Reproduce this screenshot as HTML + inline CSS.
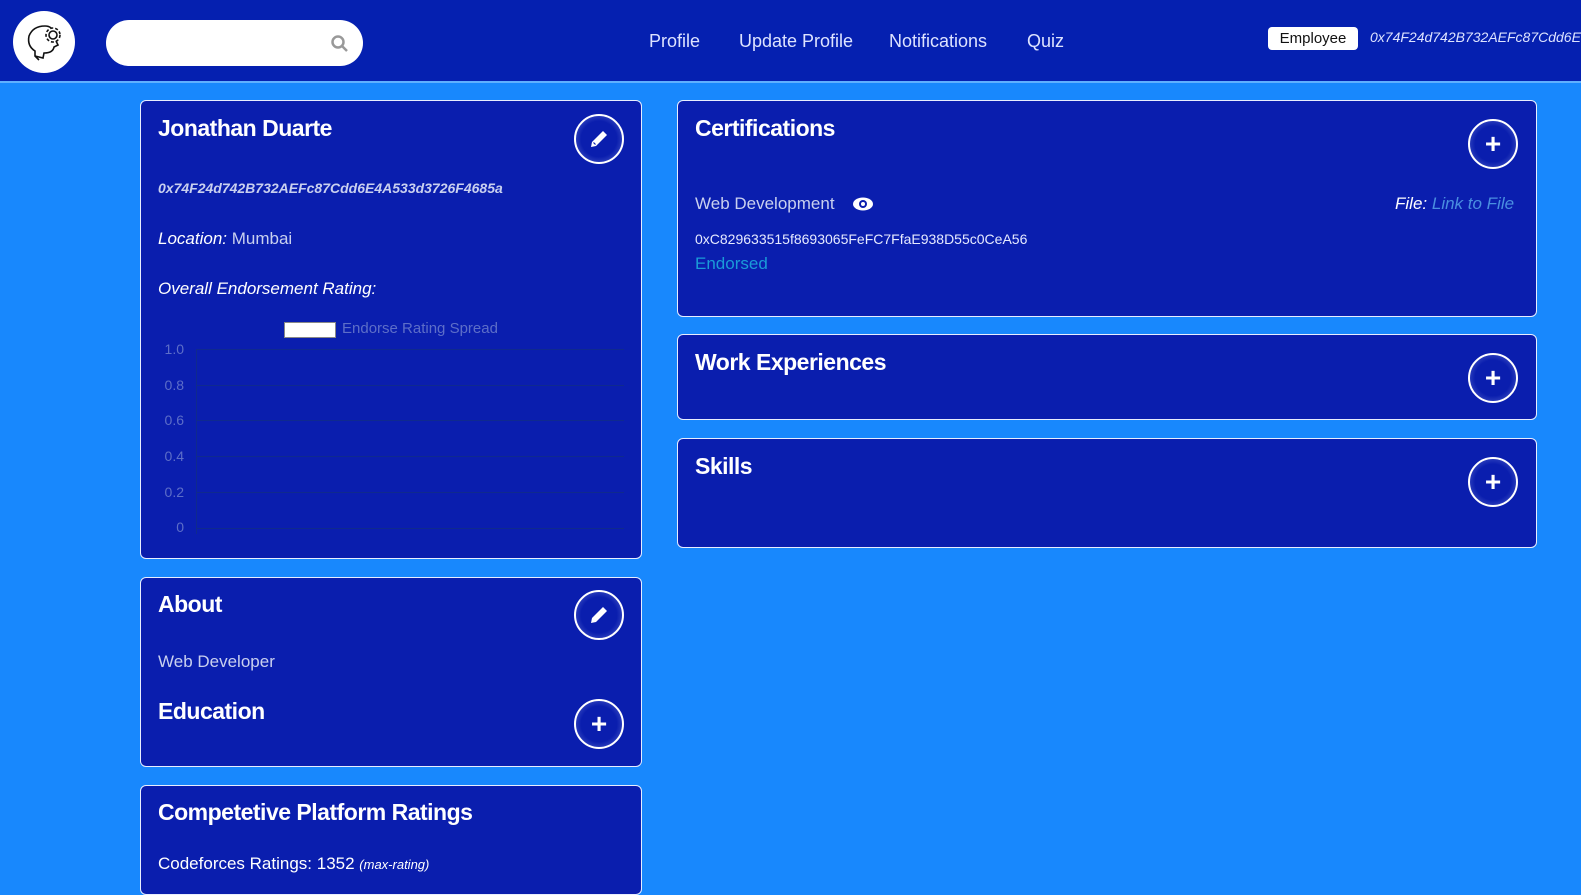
<!DOCTYPE html>
<html><head><style>
*{box-sizing:border-box;margin:0;padding:0}
body{width:1581px;height:878px;overflow:hidden;background:#1888fd;font-family:"Liberation Sans",sans-serif;color:#fff;position:relative}
.hdr{position:absolute;left:0;top:0;width:1581px;height:83px;background:#0520b0;border-bottom:2px solid #5fb0ff;overflow:hidden}
.logo{position:absolute;left:13px;top:11px;width:62px;height:62px;border-radius:50%;background:#fff}
.search{position:absolute;left:106px;top:20px;width:257px;height:46px;border-radius:23px;background:#fff}
.nav{position:absolute;top:31px;font-size:18px;color:#dde3ff}
.badge{position:absolute;left:1268px;top:27px;width:90px;height:23px;background:#fff;border-radius:4px;color:#111;font-size:15px;text-align:center;line-height:23px}
.addr{position:absolute;left:1370px;top:29px;font-size:14px;font-style:italic;color:#dde3ff;white-space:nowrap}
.card{position:absolute;background:#0a1eae;border:1.5px solid #e8eeff;border-radius:6px;overflow:hidden}
.t{position:absolute;font-size:23px;font-weight:bold;letter-spacing:-0.5px}
.btn{position:absolute;width:50px;height:50px;border-radius:50%;border:2px solid #fff;background:radial-gradient(circle,#0a1eae 55%,#5a6bd0);display:flex;align-items:center;justify-content:center;font-size:28px;font-weight:bold}
.s{position:absolute;font-size:17px;color:#c9d0ef;white-space:nowrap}
.yl{position:absolute;left:14px;width:29px;text-align:right;font-size:14px;color:#5d6ec8}
.gl{position:absolute;left:55px;width:428px;height:1px;background:#0f2a8e}
</style></head><body>
<div class="hdr">
<div class="logo"><svg width="62" height="62" viewBox="0 0 62 62" fill="none" stroke="#111" stroke-width="1.6"><path d="M26 49 L22 45 L22 40 Q14 35 16 25 Q20 15 32 15 Q36 15 38 17"/><path d="M22 45 L30 47 L31 42 Q40 42 41 36 L45 34 L43 30"/><circle cx="40" cy="24" r="4"/><circle cx="40" cy="24" r="7" stroke-dasharray="3 2"/></svg></div>
<div class="search"><svg style="position:absolute;left:224px;top:14px" width="20" height="20" viewBox="0 0 20 20" fill="none" stroke="#999" stroke-width="2.5"><circle cx="8" cy="8" r="5.5"/><path d="M12 12 L17 17"/></svg></div>
<div class="nav" style="left:649px">Profile</div>
<div class="nav" style="left:739px">Update Profile</div>
<div class="nav" style="left:889px">Notifications</div>
<div class="nav" style="left:1027px">Quiz</div>
<div class="badge">Employee</div>
<div class="addr">0x74F24d742B732AEFc87Cdd6E4A533d3726F4685a</div>
</div>

<div class="card" style="left:140px;top:100px;width:502px;height:459px">
<div class="t" style="left:17px;top:14px">Jonathan Duarte</div>
<div class="btn" style="left:433px;top:13px"><svg width="24" height="24" viewBox="0 0 24 24" fill="#fff"><path d="M4 20 L5 15 L16 4 L20 8 L9 19 Z"/><path d="M6.5 15.5 L8.5 17.5" stroke="#0a1eae" stroke-width="1.2"/></svg></div>
<div class="s" style="left:17px;top:79px;font-size:14px;font-style:italic;font-weight:bold">0x74F24d742B732AEFc87Cdd6E4A533d3726F4685a</div>
<div class="s" style="left:17px;top:128px"><i style="color:#fff">Location:</i> Mumbai</div>
<div class="s" style="left:17px;top:178px;color:#fff;font-style:italic">Overall Endorsement Rating:</div>
<div style="position:absolute;left:143px;top:221px;width:52px;height:16px;background:#fff;border:1px solid #888"></div>
<div class="s" style="left:201px;top:219px;font-size:15px;color:#5d6ec8">Endorse Rating Spread</div>
<div class="yl" style="top:240px">1.0</div><div class="gl" style="top:248px"></div>
<div class="yl" style="top:276px">0.8</div><div class="gl" style="top:284px"></div>
<div class="yl" style="top:311px">0.6</div><div class="gl" style="top:319px"></div>
<div class="yl" style="top:347px">0.4</div><div class="gl" style="top:355px"></div>
<div class="yl" style="top:383px">0.2</div><div class="gl" style="top:391px"></div>
<div class="yl" style="top:418px">0</div><div class="gl" style="top:427px"></div>
<div style="position:absolute;left:55px;top:248px;width:1px;height:185px;background:#0f2a8e"></div>
</div>

<div class="card" style="left:140px;top:577px;width:502px;height:190px">
<div class="t" style="left:17px;top:13px">About</div>
<div class="btn" style="left:433px;top:12px"><svg width="24" height="24" viewBox="0 0 24 24" fill="#fff"><path d="M4 20 L5 15 L16 4 L20 8 L9 19 Z"/></svg></div>
<div class="s" style="left:17px;top:74px">Web Developer</div>
<div class="t" style="left:17px;top:120px">Education</div>
<div class="btn" style="left:433px;top:121px">+</div>
</div>

<div class="card" style="left:140px;top:785px;width:502px;height:110px">
<div class="t" style="left:17px;top:13px">Competetive Platform Ratings</div>
<div class="s" style="left:17px;top:68px;color:#fff">Codeforces Ratings: 1352 <i style="font-size:13px">(max-rating)</i></div>
</div>

<div class="card" style="left:677px;top:100px;width:860px;height:217px">
<div class="t" style="left:17px;top:14px">Certifications</div>
<div class="btn" style="left:790px;top:18px">+</div>
<div class="s" style="left:17px;top:93px">Web Development</div>
<svg style="position:absolute;left:174px;top:95px" width="22" height="16" viewBox="0 0 22 16"><ellipse cx="11" cy="8" rx="10" ry="6.5" fill="#fff"/><circle cx="11" cy="8" r="4" fill="#0a1eae"/><circle cx="11" cy="8" r="2" fill="#fff"/></svg>
<div class="s" style="left:717px;top:93px;font-style:italic"><span style="color:#fff">File:</span> <span style="color:#4a8fe0">Link to File</span></div>
<div class="s" style="left:17px;top:130px;font-size:14px;color:#e6eaff">0xC829633515f8693065FeFC7FfaE938D55c0CeA56</div>
<div class="s" style="left:17px;top:153px;color:#1a9bd8">Endorsed</div>
</div>

<div class="card" style="left:677px;top:334px;width:860px;height:86px">
<div class="t" style="left:17px;top:14px">Work Experiences</div>
<div class="btn" style="left:790px;top:18px">+</div>
</div>

<div class="card" style="left:677px;top:438px;width:860px;height:110px">
<div class="t" style="left:17px;top:14px">Skills</div>
<div class="btn" style="left:790px;top:18px">+</div>
</div>
</body></html>
